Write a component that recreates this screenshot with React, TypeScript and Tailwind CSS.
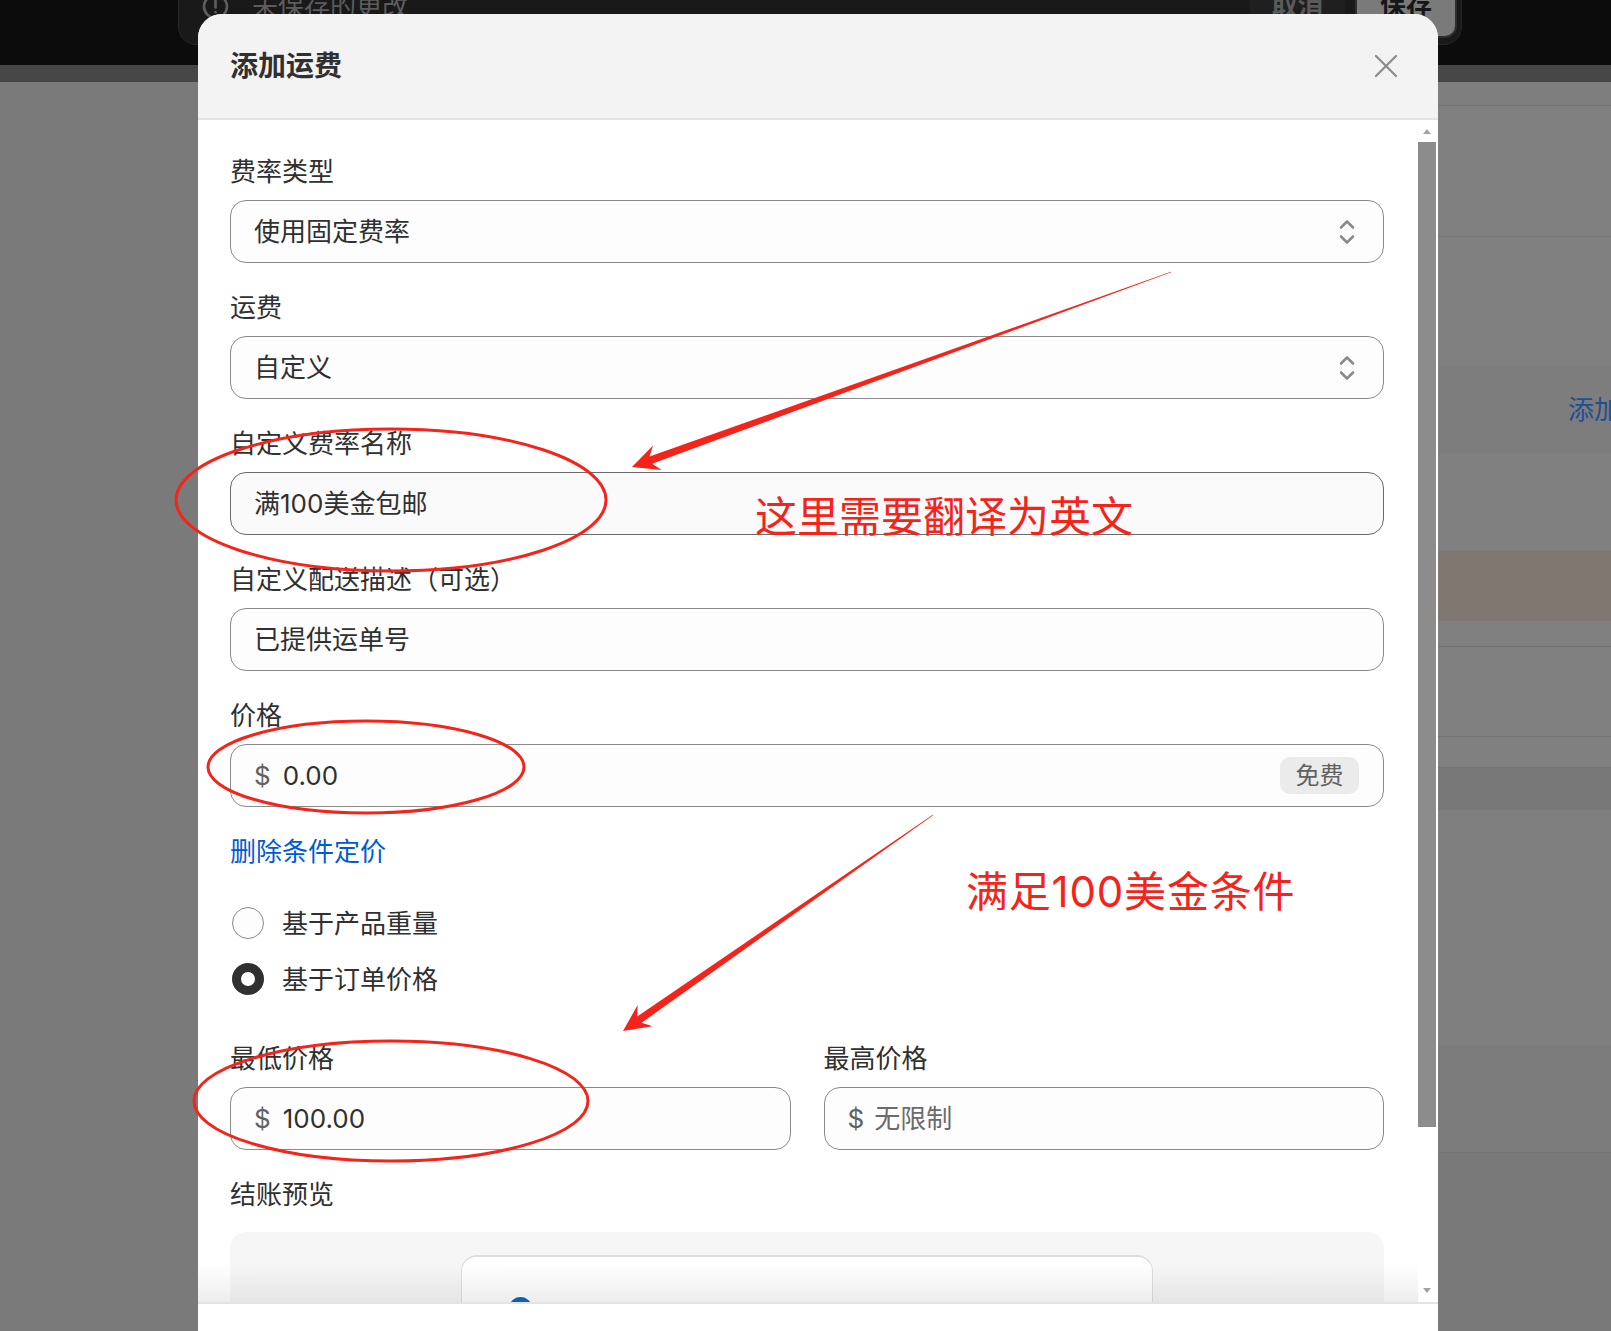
import React from "react";

const RED = "#f5241b";

function Chevrons() {
  return (
    <svg width="16" height="28" viewBox="0 0 16 28" fill="none" stroke="#8a8a8a" strokeWidth="2.6" strokeLinecap="round" strokeLinejoin="round">
      <path d="M2 9.5 L8 3.5 L14 9.5" />
      <path d="M2 18.5 L8 24.5 L14 18.5" />
    </svg>
  );
}

function CloseIcon() {
  return (
    <svg width="24" height="24" viewBox="0 0 24 24" fill="none" stroke="#8a8a8a" strokeWidth="2.2" strokeLinecap="round">
      <path d="M2 2 L22 22" />
      <path d="M22 2 L2 22" />
    </svg>
  );
}

function AlertIcon() {
  return (
    <svg width="27" height="27" viewBox="0 0 27 27" fill="none" stroke="#5e5e5e" strokeWidth="2.6" strokeLinecap="round">
      <circle cx="13.5" cy="13.5" r="11.5" />
      <path d="M13.5 7.5 L13.5 14.5" />
      <path d="M13.5 19 L13.5 19.2" />
    </svg>
  );
}

function arrowPoints(sx: number, sy: number, tx: number, ty: number) {
  const dx = sx - tx;
  const dy = sy - ty;
  const len = Math.hypot(dx, dy);
  const ux = dx / len;
  const uy = dy / len;
  const nx = -uy;
  const ny = ux;
  const headLen = 20;
  const barbLen = 27;
  const headHalf = 13;
  const shaftHalf = 3.8;
  const startHalf = 0.3;
  const bx = tx + ux * headLen;
  const by = ty + uy * headLen;
  const gx = tx + ux * barbLen;
  const gy = ty + uy * barbLen;
  const pts: [number, number][] = [
    [sx + nx * startHalf, sy + ny * startHalf],
    [bx + nx * shaftHalf, by + ny * shaftHalf],
    [gx + nx * headHalf, gy + ny * headHalf],
    [tx, ty],
    [gx - nx * headHalf, gy - ny * headHalf],
    [bx - nx * shaftHalf, by - ny * shaftHalf],
    [sx - nx * startHalf, sy - ny * startHalf],
  ];
  return pts.map((p) => `${p[0].toFixed(1)},${p[1].toFixed(1)}`).join(" ");
}

const labelCls = "text-[26px] leading-[36px] text-[#303030] whitespace-nowrap";
const inputCls =
  "mt-[10px] h-[63px] rounded-[16px] border border-[#8a8a8a] bg-[#fdfdfd] flex items-center text-[26px] text-[#303030] whitespace-nowrap";

function TopBar() {
  return (
    <div className="flow-root h-[65px] bg-[#0c0c0c] pl-[178px] pr-[149px]">
      <div className="-mt-[20px] h-[65px] rounded-[18px] bg-[#191919] border border-[#272727] flex items-start justify-between pl-[23px] pr-[4px]">
        <div className="flex items-center gap-[23px] h-[50px]">
          <AlertIcon />
          <span className="text-[26px] text-[#5c5c5c]">未保存的更改</span>
        </div>
        <div className="flex items-start gap-[10px]">
          <div className="w-[95px] h-[57px] rounded-[12px] bg-[#1f1f1f] flex items-center justify-center pb-[8px] text-[26px] font-bold text-[#5a5a5a]">
            取消
          </div>
          <div className="w-[102px] h-[57px] rounded-[12px] bg-[#7a7a7a] border-2 border-[#2e2e2e] flex items-center justify-center pb-[8px] text-[26px] font-bold text-[#161616]">
            保存
          </div>
        </div>
      </div>
    </div>
  );
}

function BackgroundPage() {
  return (
    <div className="flex">
      <div className="w-[1000px] shrink-0" />
      <div className="flex-1 flex flex-col">
        <div className="h-[24px] bg-[#7e7e7e] border-b border-[#747474]" />
        <div className="h-[131px] bg-[#808080] border-b border-[#777777]" />
        <div className="h-[129px] bg-[#808080]" />
        <div className="h-[87px] bg-[#7d7d7d] flex items-center pl-[568px] overflow-hidden">
          <span className="text-[26px] text-[#1f4f94] whitespace-nowrap">添加运费</span>
        </div>
        <div className="h-[98px] bg-[#808080]" />
        <div className="h-[70px] bg-[#7f7770]" />
        <div className="h-[26px] bg-[#808080] border-b border-[#747474]" />
        <div className="h-[90px] bg-[#808080] border-b border-[#747474]" />
        <div className="h-[31px] bg-[#808080] border-b border-[#747474]" />
        <div className="h-[42px] bg-[#787878]" />
        <div className="h-[236px] bg-[#7f7f7f]" />
        <div className="h-[107px] bg-[#7b7b7b] border-b border-[#747474]" />
        <div className="h-[200px] bg-[#797979]" />
      </div>
    </div>
  );
}

function Modal() {
  return (
    <div className="absolute left-[198px] top-[14px] w-[1240px] h-[1317px] rounded-t-[24px] overflow-hidden bg-white flex flex-col">
      <div className="h-[106px] shrink-0 bg-[#f3f3f3] border-b-2 border-[#e3e3e3] flex items-center justify-between pl-[32px] pr-[40px]">
        <span className="text-[28px] font-bold text-[#303030]">添加运费</span>
        <CloseIcon />
      </div>
      <div className="h-[1182px] shrink-0 flex relative overflow-hidden bg-white">
        <div className="flex-1 pl-[32px] pr-[34px] pt-[34px] flex flex-col relative">
          <div className="flex flex-col gap-[27px]">
            <div>
              <div className={labelCls}>费率类型</div>
              <div className={`${inputCls} justify-between pl-[23px] pr-[28px]`}>
                <span>使用固定费率</span>
                <Chevrons />
              </div>
            </div>
            <div>
              <div className={labelCls}>运费</div>
              <div className={`${inputCls} justify-between pl-[23px] pr-[28px]`}>
                <span>自定义</span>
                <Chevrons />
              </div>
            </div>
            <div>
              <div className={labelCls}>自定义费率名称</div>
              <div className="mt-[10px] h-[63px] rounded-[16px] border border-[#6b6b6b] bg-[#fafafa] flex items-center pl-[23px] text-[26px] text-[#303030] whitespace-nowrap">
                满100美金包邮
              </div>
            </div>
            <div>
              <div className={labelCls}>自定义配送描述（可选）</div>
              <div className={`${inputCls} pl-[23px]`}>已提供运单号</div>
            </div>
            <div>
              <div className={labelCls}>价格</div>
              <div className={`${inputCls} justify-between pl-[23px] pr-[24px]`}>
                <div className="flex items-center gap-[12px]">
                  <span className="text-[#616161]">$</span>
                  <span>0.00</span>
                </div>
                <span className="h-[37px] w-[79px] rounded-[10px] bg-[#ebebeb] flex items-center justify-center text-[24px] text-[#616161]">
                  免费
                </span>
              </div>
            </div>
          </div>

          <div className="mt-[27px] h-[36px] text-[26px] leading-[36px] text-[#005bd3]">删除条件定价</div>

          <div className="mt-[33px] flex flex-col gap-[16px]">
            <div className="h-[40px] flex items-center gap-[18px] text-[26px] text-[#303030]">
              <span className="ml-[2px] w-[32px] h-[32px] rounded-full border border-[#8a8a8a] bg-[#fdfdfd]" />
              <span>基于产品重量</span>
            </div>
            <div className="h-[40px] flex items-center gap-[18px] text-[26px] text-[#303030]">
              <span className="ml-[2px] w-[32px] h-[32px] rounded-full border-[9px] border-[#303030] bg-white" />
              <span>基于订单价格</span>
            </div>
          </div>

          <div className="mt-[42px] grid grid-cols-2 gap-[33px]">
            <div>
              <div className={labelCls}>最低价格</div>
              <div className={`${inputCls} pl-[23px] gap-[12px]`}>
                <span className="text-[#616161]">$</span>
                <span>100.00</span>
              </div>
            </div>
            <div>
              <div className={labelCls}>最高价格</div>
              <div className={`${inputCls} pl-[23px] gap-[10px]`}>
                <span className="text-[#616161]">$</span>
                <span className="text-[#6b6b6b]">无限制</span>
              </div>
            </div>
          </div>

          <div className={`mt-[27px] ${labelCls}`}>结账预览</div>
          <div className="mt-[19px] h-[220px] shrink-0 rounded-[16px] bg-[#f6f6f6] pt-[23px] flex justify-center">
            <div className="w-[692px] h-[200px] rounded-[16px] bg-white border border-[#dedede] border-t-2 pl-[47px] pt-[40px]">
              <div className="w-[23px] h-[23px] rounded-full bg-[#0b6bbf]" />
            </div>
          </div>

          <div className="absolute left-0 right-0 bottom-0 h-[38px] bg-gradient-to-t from-black/[0.07] to-transparent" />
        </div>

        <div className="w-[18px] shrink-0 flex flex-col items-center">
          <div className="h-[22px] w-full flex justify-center pt-[9px]">
            <div className="w-0 h-0 border-l-[4px] border-r-[4px] border-b-[5px] border-l-transparent border-r-transparent border-b-[#a3a3a3]" />
          </div>
          <div className="h-[985px] w-full bg-[#8c8c8c]" />
          <div className="flex-1 w-full flex items-end justify-center pb-[9px]">
            <div className="w-0 h-0 border-l-[4px] border-r-[4px] border-t-[5px] border-l-transparent border-r-transparent border-t-[#a3a3a3]" />
          </div>
        </div>
        <div className="w-[2px] shrink-0" />
      </div>
      <div className="flex-1 border-t-2 border-[#e3e3e3] bg-white" />
    </div>
  );
}

function Annotations() {
  return (
    <>
      <svg className="absolute left-0 top-0 pointer-events-none" width="1611" height="1331" viewBox="0 0 1611 1331">
        <ellipse cx="391" cy="500" rx="215" ry="71" fill="none" stroke={RED} strokeWidth="3" />
        <ellipse cx="366" cy="767" rx="158" ry="46" fill="none" stroke={RED} strokeWidth="3" />
        <ellipse cx="391" cy="1101" rx="197" ry="60" fill="none" stroke={RED} strokeWidth="3" />
        <polygon points={arrowPoints(1171, 272, 632, 467)} fill={RED} />
        <polygon points={arrowPoints(933, 815, 623, 1031)} fill={RED} />
      </svg>
      <div className="absolute left-[755px] top-[496px] text-[42px] leading-[42px] text-[#f5241b] whitespace-nowrap pointer-events-none">
        这里需要翻译为英文
      </div>
      <div className="absolute left-[966px] top-[871px] text-[42px] leading-[42px] tracking-[0.8px] text-[#f5241b] whitespace-nowrap pointer-events-none">
        满足100美金条件
      </div>
    </>
  );
}

export default function App() {
  return (
    <div className="relative h-[1331px] w-full overflow-hidden bg-[#7a7a7a] font-['Inter','Noto_Sans_CJK_SC',sans-serif]">
      <TopBar />
      <div className="h-[17px] bg-[#474747]" />
      <BackgroundPage />
      <Modal />
      <Annotations />
    </div>
  );
}
